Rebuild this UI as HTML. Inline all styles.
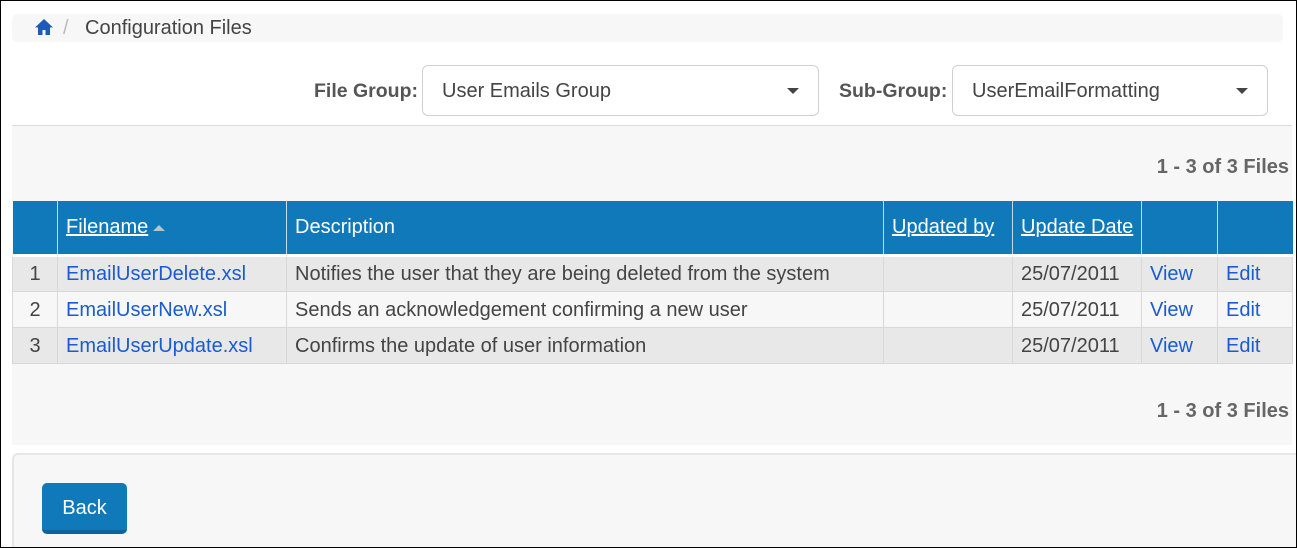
<!DOCTYPE html>
<html><head><style>
*{box-sizing:border-box;margin:0;padding:0}
html,body{width:1297px;height:548px;overflow:hidden;background:#fff}
body{font-family:"Liberation Sans",Arial,sans-serif;color:#444;position:relative}
.abs{position:absolute}
.frame{left:0;top:0;width:1297px;height:548px;border:1px solid #000;z-index:10;pointer-events:none}
.bc{left:12px;top:14px;width:1271px;height:28px;background:#f7f7f7;border-radius:5px}
.lbl{font-weight:bold;font-size:19.5px;color:#555;top:80px}
.sel{top:65px;height:51px;border:1px solid #d0d0d0;border-radius:6px;background:#fff;font-size:20px;color:#444;padding:14px 0 0 19px}
.sel .car{position:absolute;right:19px;top:22px;width:0;height:0;border-left:6px solid transparent;border-right:6px solid transparent;border-top:6px solid #444}
.gray{left:12px;top:125px;width:1280px;height:320px;background:#f7f7f7;border-top:1px solid #ddd}
.cnt{right:8px;font-weight:bold;font-size:20px;color:#666}
table{position:absolute;left:12px;top:201px;width:1281px;border-collapse:collapse;font-size:20px;table-layout:fixed}
th{background:#1079ba;color:#fff;font-weight:normal;text-align:left;height:54px;padding:0 8px;border-left:1px solid #c8d8e4;border-bottom:3px solid #fff;white-space:nowrap;overflow:hidden}
th:first-child{border-left:none}
th a{color:#fff;text-decoration:underline}
td{height:36px;padding:2px 8px 0;border:1px solid #d8d8d8;color:#444;white-space:nowrap;overflow:hidden}
tr.o td{background:#e8e8e8}
td.n{text-align:center}
td a{color:#1a5bd0;text-decoration:none}
.bot{left:12px;top:453px;width:1290px;height:100px;background:#f7f7f7;border:2px solid #e6e6e6;border-radius:6px}
.btn{left:42px;top:483px;width:85px;height:51px;background:#1079ba;border-radius:5px;border-bottom:4px solid #0b649d;color:#fff;font-size:20px;text-align:center;line-height:50px}
</style></head><body>
<div class="abs frame"></div>
<div class="abs bc"></div>
<svg class="abs" style="left:34px;top:18px" width="20" height="18" viewBox="0 0 20 18"><path d="M10 1 L1 9.5 H4 V17 H8.5 V12 H11.5 V17 H16 V9.5 H19 Z" fill="#1f5bb5"/></svg>
<div class="abs" style="left:63px;top:17px;font-size:20px;color:#bbb">/</div>
<div class="abs" style="left:85px;top:17px;font-size:20px;color:#444">Configuration Files</div>

<div class="abs lbl" style="left:314px">File Group:</div>
<div class="abs sel" style="left:422px;width:397px">User Emails Group<div class="car"></div></div>
<div class="abs lbl" style="left:839px">Sub-Group:</div>
<div class="abs sel" style="left:952px;width:316px">UserEmailFormatting<div class="car"></div></div>

<div class="abs gray"></div>
<div class="abs cnt" style="top:156px">1 - 3 of 3 Files</div>
<table>
<colgroup><col style="width:45px"><col style="width:229px"><col style="width:597px"><col style="width:129px"><col style="width:129px"><col style="width:76px"><col></colgroup>
<tr><th></th><th><a>Filename</a><svg width="16" height="10" viewBox="0 0 16 10" style="margin-left:3px"><path d="M2 8 L8 2 L14 8 Z" fill="#b8c4cc"/></svg></th><th>Description</th><th><a>Updated by</a></th><th><a>Update Date</a></th><th></th><th></th></tr>
<tr class="o"><td class="n">1</td><td><a>EmailUserDelete.xsl</a></td><td>Notifies the user that they are being deleted from the system</td><td></td><td>25/07/2011</td><td><a>View</a></td><td><a>Edit</a></td></tr>
<tr><td class="n">2</td><td><a>EmailUserNew.xsl</a></td><td>Sends an acknowledgement confirming a new user</td><td></td><td>25/07/2011</td><td><a>View</a></td><td><a>Edit</a></td></tr>
<tr class="o"><td class="n">3</td><td><a>EmailUserUpdate.xsl</a></td><td>Confirms the update of user information</td><td></td><td>25/07/2011</td><td><a>View</a></td><td><a>Edit</a></td></tr>
</table>
<div class="abs cnt" style="top:400px">1 - 3 of 3 Files</div>
<div class="abs bot"></div>
<div class="abs btn">Back</div>
</body></html>
